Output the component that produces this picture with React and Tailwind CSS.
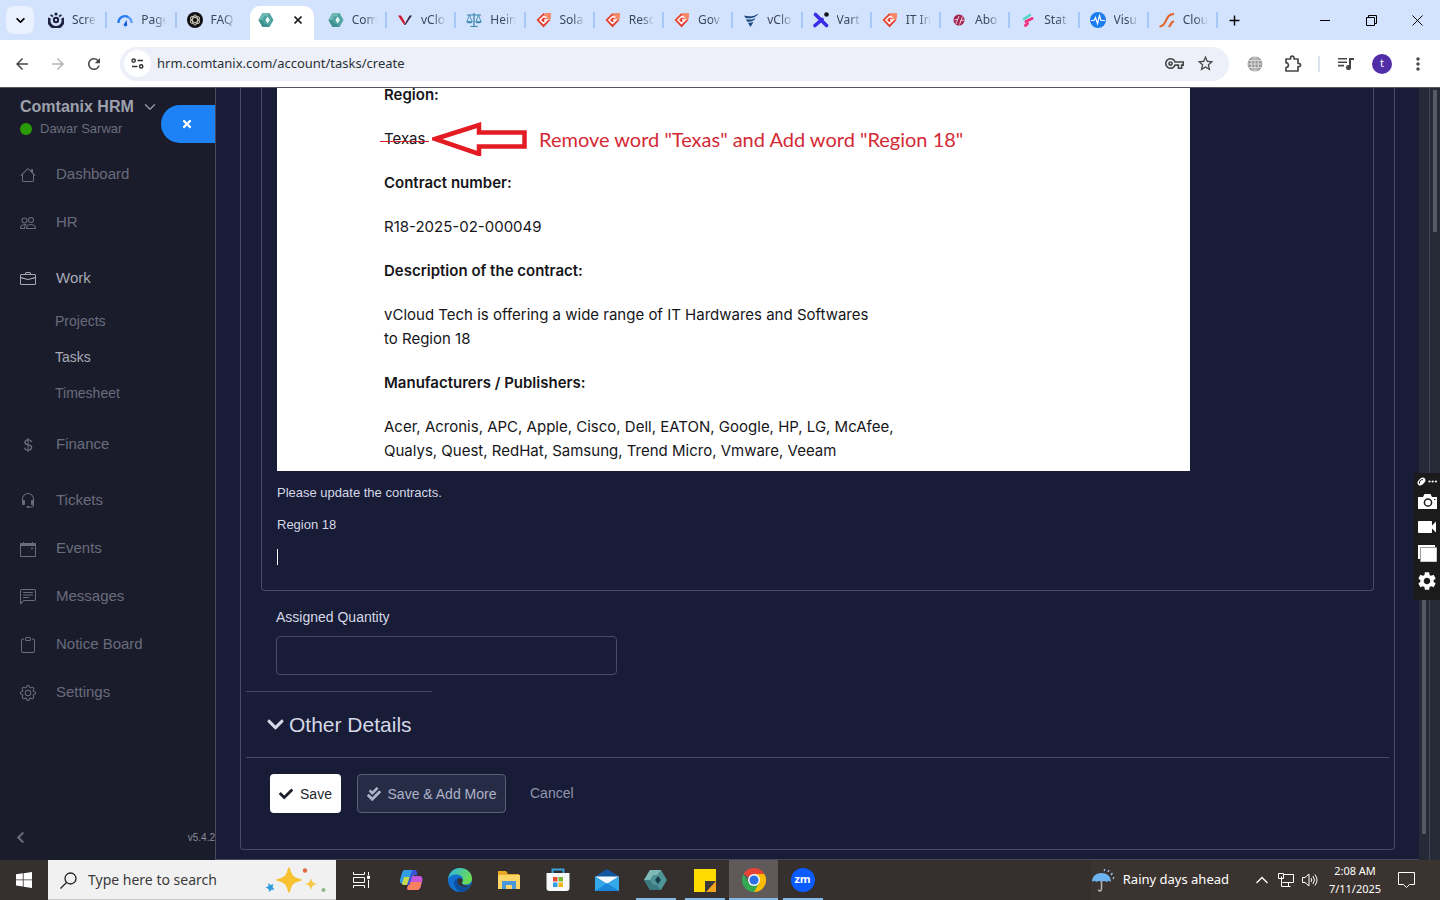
import { useState } from "react";
import {
  BsHouse,
  BsPeople,
  BsBriefcase,
  BsCurrencyDollar,
  BsHeadset,
  BsChatLeftText,
  BsClipboard,
  BsGear,
  BsChevronDown,
} from "react-icons/bs";
import { FaCheck, FaCheckDouble, FaChevronDown, FaChevronLeft, FaTimes } from "react-icons/fa";
import {
  MdArrowBack,
  MdArrowForward,
  MdRefresh,
  MdStarBorder,
  MdOutlineVpnKey,
  MdMoreVert,
  MdAdd,
  MdVideocam,
  MdSettings,
} from "react-icons/md";

// ─── Favicons ──────────────────────────────────────────────────────────────────
function HexLogo({ size = 16 }) {
  return (
    <svg width={size} height={size} viewBox="0 0 16 16">
      <path d="M4.500 1h7L15.500 8l-4 7h-7L.5 8z" fill="#4fa3a0" />
      <path d="M4.500 1h7L9 4H6.500L4 8 .5 8z" fill="#6fb8b4" />
      <path d="M.5 8H4l2.500 4H9l2.500 3h-7z" fill="#3f9090" />
      <path d="M9.500 4.500 12 8l-2.500 3.500L7.500 8z" fill="#e8f6f5" />
    </svg>
  );
}

// darker build of the mark used for the desktop app
function HexApp() {
  return (
    <svg width="23" height="22" viewBox="0 0 23 22">
      <path d="M6 1h11l6 10-6 10H6L0 11z" fill="#4f9497" />
      <path d="M6 1h11l-4 5H9l-3 5H0z" fill="#7fb9b8" />
      <path d="M0 11h6l3 5h4l4 5H6z" fill="#3a7a80" />
      <path d="M14 7l3 4-3 4-3-4z" fill="#173b4a" />
    </svg>
  );
}

function RedDiamond() {
  return (
    <svg width="16" height="16" viewBox="0 0 16 16">
      <path d="M7.500 1 14.500 8l-7 7.500L.5 8z" fill="#e5402f" />
      <path d="M9 1h6v5l-3 3-5-5z" fill="#f58a6c" />
      <path d="M10.500 5.500 7.500 4.500l-3.500 3.500 3.500 3.500 3.500-3.500H8" fill="none" stroke="#fff" strokeWidth="1.500" />
    </svg>
  );
}

function Screamer() {
  return (
    <svg width="16" height="16" viewBox="0 0 16 16">
      <path d="M1.500 6a7 7 0 1 0 13 0" fill="none" stroke="#1d2340" strokeWidth="3" />
      <circle cx="8" cy="8" r="3.200" fill="#1d2340" />
      <circle cx="8" cy="8" r="1.100" fill="#fff" />
      <circle cx="8" cy="2" r="1.600" fill="#1d2340" />
      <path d="m2.500 3 2.500 1.500M13.500 3 11 4.500" stroke="#1d2340" strokeWidth="1.800" />
    </svg>
  );
}

function Speed() {
  return (
    <svg width="16" height="16" viewBox="0 0 16 16">
      <path d="M1.500 11a6.500 6.500 0 0 1 10-5.800" fill="none" stroke="#2a7bf6" strokeWidth="2.400" />
      <path d="M11 5a6.500 6.500 0 0 1 3.500 6" fill="none" stroke="#5b9cf8" strokeWidth="2.400" />
      <path d="m6.500 13 3-5 .8 5a2 2 0 0 1-3.800 0z" fill="#1a5fe0" />
    </svg>
  );
}

function Gpt() {
  return (
    <svg width="16" height="16" viewBox="0 0 16 16">
      <circle cx="8" cy="8" r="8" fill="#111" />
      <g fill="none" stroke="#d8cfc0" strokeWidth=".9">
        <ellipse cx="8" cy="8" rx="2.500" ry="5" />
        <ellipse cx="8" cy="8" rx="2.500" ry="5" transform="rotate(60 8 8)" />
        <ellipse cx="8" cy="8" rx="2.500" ry="5" transform="rotate(120 8 8)" />
      </g>
    </svg>
  );
}

function RedV() {
  return (
    <svg width="16" height="16" viewBox="0 0 16 16">
      <path d="M1 3.500h3L8 10l-.8 3z" fill="#d0172c" />
      <path d="m7.200 13 5.300-9.500H15L8.500 13z" fill="#3a2340" />
    </svg>
  );
}

function Scales() {
  return (
    <svg width="16" height="16" viewBox="0 0 16 16" fill="none" stroke="#3583ae" strokeWidth="1.200">
      <path d="M8 1v13M4.500 14.500h7M1 3h14" />
      <path d="M3.500 3 1 9.500M3.500 3 6 9.500M12.500 3 10 9.500M12.500 3 15 9.500" strokeWidth=".8" />
      <path d="M.5 9.500h6c-.5 2-5.500 2-6 0zM9.500 9.500h6c-.5 2-5.500 2-6 0z" fill="#3583ae" strokeWidth=".5" />
    </svg>
  );
}

function NavyWing() {
  return (
    <svg width="16" height="16" viewBox="0 0 16 16" fill="#1f4a80">
      <path d="M1 3.500c5 1.500 10 1 14.500-2C13 6 7 7 2.500 6z" />
      <path d="M3 7.200c3.500.8 7 .3 9.500-1.200-1 3-5 4.300-8.300 3.700z" />
      <path d="M5 10.700c2 .4 3.800 0 5.300-1-.7 2.500-2.500 4.500-3 5.300z" />
    </svg>
  );
}

function Varta() {
  return (
    <svg width="16" height="16" viewBox="0 0 16 16">
      <path d="m2.500 2.500 11 11M2 13.500l7-6" stroke="#3a2ce8" strokeWidth="3.600" strokeLinecap="round" />
      <circle cx="13.500" cy="2.500" r="2.300" fill="#111" />
    </svg>
  );
}

function Crimson() {
  return (
    <svg width="16" height="16" viewBox="0 0 16 16">
      <circle cx="8" cy="8" r="5.500" fill="#a3234f" />
      <path d="m5 12 3-8M8.500 12.500l3-8M3.500 8l3-1M9 9l4-1" stroke="#f2c9d8" strokeWidth="1" />
    </svg>
  );
}

function Statly() {
  return (
    <svg width="16" height="16" viewBox="0 0 16 16" strokeLinecap="round" fill="none">
      <path d="m4 7 6-4" stroke="#53d6c4" strokeWidth="2.600" />
      <path d="m6 9.500 6-3" stroke="#f2347f" strokeWidth="3" />
      <path d="m5.500 13.500 2-2" stroke="#f2347f" strokeWidth="3" />
    </svg>
  );
}

function Pulse() {
  return (
    <svg width="16" height="16" viewBox="0 0 16 16">
      <circle cx="8" cy="8" r="8" fill="#1c7cf2" />
      <path d="M1 8.500h3l1.500-3 2 6 2-8 1.500 5H15" fill="none" stroke="#fff" strokeWidth="1.200" />
    </svg>
  );
}

function OrangeS() {
  return (
    <svg width="16" height="16" viewBox="0 0 16 16" fill="none" stroke="#e2622b">
      <path d="M.5 14.500c8 0 5-12.500 14.500-12.500" strokeWidth="2.200" />
      <path d="M9.500 14.500c3 0 1.500-5 5.500-5" strokeWidth="2.200" />
    </svg>
  );
}

const TABS = [
  { title: "Scre", icon: <Screamer /> },
  { title: "Page", icon: <Speed /> },
  { title: "FAQ", icon: <Gpt /> },
  { title: "", icon: <HexLogo />, active: true },
  { title: "Com", icon: <HexLogo /> },
  { title: "vClo", icon: <RedV /> },
  { title: "Hein", icon: <Scales /> },
  { title: "Sola", icon: <RedDiamond /> },
  { title: "Resc", icon: <RedDiamond /> },
  { title: "Gov", icon: <RedDiamond /> },
  { title: "vClo", icon: <NavyWing /> },
  { title: "Vart", icon: <Varta /> },
  { title: "IT In", icon: <RedDiamond /> },
  { title: "Abo", icon: <Crimson /> },
  { title: "Stat", icon: <Statly /> },
  { title: "Visu", icon: <Pulse /> },
  { title: "Clou", icon: <OrangeS /> },
];

// ─── Browser ───────────────────────────────────────────────────────────────────
function TabStrip() {
  return (
    <div className="flex h-10 shrink-0 bg-[#d3e3fd]">
      <div className="w-[38px] shrink-0 pl-1.5 pt-1.5">
        <button aria-label="Search tabs" className="flex size-7 items-center justify-center rounded-lg bg-[#e9f1fe]">
          <BsChevronDown size={9} strokeWidth={2} />
        </button>
      </div>
      <div className="flex min-w-0 flex-1">
        {TABS.map((t, i) =>
          t.active ? (
            <div key={i} className="flex w-[72px] shrink-0 items-end px-1">
              <div className="flex h-[34px] flex-1 items-center justify-between rounded-t-[10px] bg-white pr-3 pb-1.5 pl-2">
                {t.icon}
                <button aria-label="Close tab">
                  <svg width="8" height="8" viewBox="0 0 8 8"><path d="m.5.5 7 7M7.500.5l-7 7" stroke="#1f1f1f" strokeWidth="1.600" /></svg>
                </button>
              </div>
            </div>
          ) : (
            <div key={i} className="flex min-w-0 flex-1 items-center gap-2 pl-2.5">
              <span className="shrink-0">{t.icon}</span>
              <span className="min-w-0 flex-1 whitespace-nowrap text-xs text-[#3c4758] [mask-image:linear-gradient(to_right,black_50%,transparent)]">
                {t.title}
              </span>
              <span className={i === 2 ? "w-0.5" : "h-4 w-0.5 shrink-0 bg-[#a9c7f5]"} />
            </div>
          )
        )}
      </div>
      <div className="flex w-[222px] shrink-0 items-center pl-2">
        <button aria-label="New tab" className="mr-auto"><MdAdd size={17} /></button>
        <button aria-label="Minimize" className="flex w-[46px] justify-center">
          <svg width="10" height="10" viewBox="0 0 10 10"><path d="M0 5.500h10" stroke="#000" /></svg>
        </button>
        <button aria-label="Restore" className="flex w-[46px] justify-center">
          <svg width="11" height="11" viewBox="0 0 11 11" fill="none" stroke="#000"><path d="M.5 2.500h8v8h-8zM2.500 2.500v-2h8v8h-2" /></svg>
        </button>
        <button aria-label="Close" className="flex w-[46px] justify-center">
          <svg width="11" height="11" viewBox="0 0 11 11"><path d="m.5.5 10 10M10.500.5l-10 10" stroke="#000" /></svg>
        </button>
      </div>
    </div>
  );
}

function Toolbar() {
  return (
    <div className="flex h-12 shrink-0 items-center border-b border-[#55575f] bg-white text-[#474747]">
      <div className="flex w-[120px] shrink-0 justify-between pl-[13px] pr-[17px]">
        <button aria-label="Back"><MdArrowBack size={18} /></button>
        <button aria-label="Forward" className="text-[#b4b4b4]"><MdArrowForward size={18} /></button>
        <button aria-label="Reload"><MdRefresh size={18} /></button>
      </div>
      <div className="flex h-[34px] min-w-0 flex-1 items-center rounded-full bg-[#edf0f9] pl-1 pr-3.5">
        <button aria-label="Site information" className="mr-1.5 flex size-[27px] shrink-0 items-center justify-center rounded-full bg-white">
          <svg width="13" height="11" viewBox="0 0 14 12" fill="none" stroke="#333" strokeWidth="1.600">
            <circle cx="2.800" cy="2.800" r="1.800" /><path d="M7 2.800h6M1 9.200h6" /><circle cx="11" cy="9.200" r="1.800" />
          </svg>
        </button>
        <input
          aria-label="Address"
          defaultValue="hrm.comtanix.com/account/tasks/create"
          className="min-w-0 flex-1 bg-transparent text-[13px] text-[#2b3036] outline-none"
        />
        <MdOutlineVpnKey size={19} />
        <MdStarBorder size={19} className="ml-3" />
      </div>
      <div className="flex w-[211px] shrink-0 items-center pl-[18px] pr-3">
        <svg width="16" height="16" viewBox="0 0 16 16">
          <circle cx="8" cy="8" r="7.500" fill="#9b9b9b" />
          <path d="M8 0v16M.5 8h15M1.500 4.500h13M1.500 11.500h13M8 .5c-5 4-5 11 0 15M8 .5c5 4 5 11 0 15" fill="none" stroke="#e6e6e6" strokeWidth=".8" />
        </svg>
        <svg className="ml-[21px]" width="18" height="18" viewBox="0 0 18 18">
          <path d="M2 4h4.500V3a1.800 1.800 0 0 1 3.600 0v1H14v4.500h1a1.600 1.600 0 0 1 0 3.200h-1V16H2v-3.500c3.200 0 3.200-4.800 0-4.800z" fill="none" stroke="#474747" strokeWidth="1.700" strokeLinejoin="round" />
        </svg>
        <span className="ml-4 h-4 w-0.5 bg-[#dde3ee]" />
        <svg className="ml-[18px]" width="16" height="14" viewBox="0 0 16 14" fill="#474747">
          <path d="M0 1h9v1.600H0zM0 4.400h9V6H0zM0 7.800h6v1.600H0zM11 1h5v2h-3v7.500a2.500 2.500 0 1 1-2-2.400z" />
        </svg>
        <span className="ml-auto flex size-5 items-center justify-center rounded-full bg-[#512da8] text-[11px] text-white">t</span>
        <MdMoreVert size={20} className="ml-4" />
      </div>
    </div>
  );
}

// ─── Sidebar ───────────────────────────────────────────────────────────────────
function CalendarIcon() {
  return (
    <svg width="16" height="16" viewBox="0 0 16 16" fill="none" stroke="currentColor">
      <path d="M.5 2.500h15v13H.5z" />
      <path d="M0 3.500h16" strokeWidth="3" />
      <path d="M3.500 1v2M12.500 1v2" />
      <path d="M11.500 7h1v1h-1z" fill="currentColor" />
    </svg>
  );
}

const MENU = [
  { label: "Dashboard", icon: <BsHouse size={16} /> },
  { label: "HR", icon: <BsPeople size={16} />, group: true },
  { label: "Work", icon: <BsBriefcase size={16} />, active: true, children: ["Projects", "Tasks", "Timesheet"] },
  { label: "Finance", icon: <BsCurrencyDollar size={16} />, group: true },
  { label: "Tickets", icon: <BsHeadset size={16} /> },
  { label: "Events", icon: <CalendarIcon /> },
  { label: "Messages", icon: <BsChatLeftText size={16} /> },
  { label: "Notice Board", icon: <BsClipboard size={16} /> },
  { label: "Settings", icon: <BsGear size={16} /> },
];

function Sidebar() {
  return (
    <aside className="flex w-[216px] shrink-0 flex-col border-r border-[#474a5d] bg-[#1a1c2c] font-['Liberation_Sans',sans-serif] text-[#696c7b]">
      <div className="flex h-[62px] items-start justify-between">
        <div className="pl-5 pt-2">
          <button className="flex items-center gap-2.5 text-base leading-[22px] font-bold text-[#9fa1ad]">
            Comtanix HRM <BsChevronDown size={12} strokeWidth={1} />
          </button>
          <p className="flex items-center gap-2 text-[13px] leading-[22px]">
            <span className="size-3 rounded-full bg-[#2a9a06]" />
            Dawar Sarwar
          </p>
        </div>
        <button aria-label="Close panel" className="mt-[17px] flex h-[38px] w-[54px] shrink-0 items-center justify-center rounded-l-full bg-[#1d82f5] pr-0.5 text-white">
          <FaTimes size={12} />
        </button>
      </div>
      <nav>
        {MENU.map((m) => (
          <div key={m.label} className={m.group ? "mb-2" : m.children ? "mb-2.5" : ""}>
            <a href="#" className={`flex h-12 items-center gap-5 pl-5 text-[15px] ${m.active ? "text-[#a9abb6]" : ""}`}>
              <span className="pt-0.5">{m.icon}</span>
              {m.label}
            </a>
            {m.children && m.children.map((c) => (
              <a key={c} href="#" className={`flex h-9 items-center pt-px pl-[55px] text-sm ${c === "Tasks" ? "text-[#a9abb6]" : ""}`}>
                {c}
              </a>
            ))}
          </div>
        ))}
      </nav>
      <div className="mt-auto flex h-[46px] items-center justify-between pl-3.5 text-[10px]">
        <button aria-label="Collapse menu"><FaChevronLeft size={13} /></button>
        <span className="text-[#8a8c99]">v5.4.2</span>
      </div>
    </aside>
  );
}

// ─── Contract snippet with the markup over it ──────────────────────────────────
function ContractSnippet() {
  return (
    <div className="w-[913px] max-w-full bg-white pb-2 pl-[107px] font-['Inter',sans-serif] text-[15px] leading-6 text-[#16161a]">
      <p className="mb-[25px] leading-[14px] font-semibold">Region:</p>
      <div className="flex flex-col gap-5">
        <div className="flex h-6 items-center whitespace-nowrap">
          <span className="relative w-[41px]">
            Texas
            <span className="absolute -right-1 -left-1 top-3.5 h-px bg-[#d8202c]" />
          </span>
          <svg className="ml-[7px] shrink-0" width="95" height="34" viewBox="0 0 95 34">
            <path d="M3 17 47 3v7.500h45.500v14H47V32z" fill="#fff" stroke="#e31b23" strokeWidth="4.500" />
          </svg>
          <span className="ml-3 font-['Lato',sans-serif] text-[20px] text-[#d42a36]">
            Remove word "Texas" and Add word "Region 18"
          </span>
        </div>
        <p className="font-semibold">Contract number:</p>
        <p>R18-2025-02-000049</p>
        <p className="font-semibold">Description of the contract:</p>
        <p>
          vCloud Tech is offering a wide range of IT Hardwares and Softwares
          <br />
          to Region 18
        </p>
        <p className="font-semibold">Manufacturers / Publishers:</p>
        <p>
          Acer, Acronis, APC, Apple, Cisco, Dell, EATON, Google, HP, LG, McAfee,
          <br />
          Qualys, Quest, RedHat, Samsung, Trend Micro, Vmware, Veeam
        </p>
      </div>
    </div>
  );
}

// ─── Task form ─────────────────────────────────────────────────────────────────
function TaskForm() {
  const [qty, setQty] = useState("");

  return (
    <main className="min-w-0 flex-1 overflow-hidden border-b border-[#474a5d] bg-[#181c36] px-6 font-['Liberation_Sans',sans-serif] text-[#d5d8e6]">
      <form className="rounded-b border-x border-b border-[#474a62] px-[5px] pb-9" onSubmit={(e) => e.preventDefault()}>
        <div className="mx-[15px] rounded-b border-x border-b border-[#474a62] px-[15px] pb-6">
          <ContractSnippet />
          <div className="flex flex-col gap-3 pt-3 text-[13px] leading-5">
            <p>Please update the contracts.</p>
            <p>Region 18</p>
            <p className="flex h-[19px] items-center"><span className="h-4 w-px bg-white" /></p>
          </div>
        </div>

        <div className="px-[30px] pt-4">
          <label htmlFor="qty" className="block text-sm leading-5">Assigned Quantity</label>
          <input
            id="qty"
            value={qty}
            onChange={(e) => setQty(e.target.value)}
            className="mt-[9px] block h-[39px] w-[341px] rounded border border-[#474a62] bg-transparent px-3 text-sm outline-none"
          />
        </div>

        <hr className="mt-4 w-[186px] border-[#474a62]" />
        <h4 className="flex h-[65px] items-center gap-1 pl-5 text-[21px]">
          <FaChevronDown size={19} /> Other Details
        </h4>
        <hr className="border-[#474a62]" />

        <div className="mt-4 flex items-center pl-6 text-sm">
          <button className="flex h-[39px] w-[71px] items-center justify-center gap-[7px] rounded-sm bg-white text-[#1d1f2b]">
            <FaCheck size={14} /> Save
          </button>
          <button className="ml-4 flex h-[39px] w-[149px] items-center justify-center gap-[7px] rounded-sm border border-[#5b5f75] bg-[#272c46] text-[#aeb3c9]">
            <FaCheckDouble size={14} /> Save &amp; Add More
          </button>
          <a href="#" className="ml-6 pb-0.5 text-[#9195ab]">Cancel</a>
        </div>
      </form>
    </main>
  );
}

function ScrollRails() {
  return (
    <div className="flex w-[21px] shrink-0">
      <div className="flex w-[11px] flex-col justify-end border-r border-[#41464f] bg-[#252a38] pb-[26px] pl-[3px]">
        <div className="h-[236px] w-1 bg-[#555a63]" />
      </div>
      <div className="flex-1 bg-[#252c38] pl-[3px] pt-0.5">
        <div className="h-[142px] w-1 bg-[#555a63]" />
      </div>
    </div>
  );
}

function RecorderDock() {
  return (
    <div className="absolute right-0 top-[385px] flex h-[127px] w-[26px] flex-col items-center gap-2 bg-[#1b1b1b] pt-1 text-white">
      <svg width="20" height="9" viewBox="0 0 20 9" fill="#fff">
        <ellipse cx="4.500" cy="4.500" rx="4.500" ry="3" transform="rotate(-45 4.500 4.500)" />
        <path d="M2.500 6.500c-.5-2 1-4 3.500-4" fill="none" stroke="#1b1b1b" />
        <circle cx="12.500" cy="4.500" r="1.100" /><circle cx="15.700" cy="4.500" r="1.100" /><circle cx="18.900" cy="4.500" r="1.100" />
      </svg>
      <svg className="shrink-0" width="19" height="15" viewBox="0 0 19 15">
        <path d="M0 3h5l1.500-3h6L14 3h5v12H0z" fill="#fff" />
        <circle cx="10" cy="8.500" r="3.600" fill="#fff" stroke="#1b1b1b" strokeWidth="1.500" />
        <path d="M16 5h1.500v1H16z" fill="#1b1b1b" />
      </svg>
      <MdVideocam size={24} className="-my-0.5 shrink-0" />
      <svg className="shrink-0" width="19" height="17" viewBox="0 0 19 17">
        <path d="M0 0h17v14H0z" fill="#fff" />
        <path d="M2.500 2.500H19V17H2.500z" fill="#fff" stroke="#999" />
      </svg>
      <MdSettings size={22} className="shrink-0" />
    </div>
  );
}

// ─── Taskbar ───────────────────────────────────────────────────────────────────
const APPS = [
  {
    name: "Task View",
    icon: (
      <svg width="18" height="16" viewBox="0 0 18 16" fill="none" stroke="#fff">
        <path d="M.5 0v2.500h11V0M.5 5.500h11v5H.5zM.5 16v-2.500h11V16M15.500 0v3M15.500 8v8" />
        <path d="M14.500 4h2v2.500h-2z" fill="#fff" />
      </svg>
    ),
  },
  {
    name: "Copilot",
    icon: (
      <svg width="24" height="22" viewBox="0 0 24 22">
        <path d="M6 1h8c1.500 0 2 1 1.500 2.500L12 15H4c-3 0-3.500-3-2.500-6L3 4c.6-2 1.500-3 3-3z" fill="#2f9fe8" />
        <path d="M5 8 3 15c.5 1 1.500 1 2.500 1h5l2-8z" fill="#c5d94a" />
        <path d="M10 21h8c2 0 3-1.500 3.500-3l1.500-5c1-3 .5-6-2.500-6h-8.500L8.500 18.500C8 20 8.500 21 10 21z" fill="#c557dc" />
        <path d="M10 21c-2 0-2-1.500-1.500-3L10 13h12.500l-1 5c-.6 2-1.600 3-3.600 3z" fill="#f7805f" />
        <path d="M13 1h3c1.500 0 2 2 2.500 5H15c-1 0-1.500.5-1.800 1.500L10.500 16H8z" fill="#3b55d8" />
      </svg>
    ),
  },
  {
    name: "Edge",
    icon: (
      <svg width="24" height="24" viewBox="0 0 24 24">
        <defs>
          <linearGradient id="edgeTop" x1="0" y1="0" x2="1" y2=".5">
            <stop offset="0" stopColor="#29b6e8" />
            <stop offset="1" stopColor="#6ddc50" />
          </linearGradient>
        </defs>
        <circle cx="12" cy="12" r="12" fill="#1271cf" />
        <path d="M0 11C1 4.500 6 0 12 0c7 0 12 5 12 10.500 0 4-3 6-6.500 6-2.500 0-3.500-1-3.500-2 0-.8 1-1.200 1-3C15 9 12.500 6.500 8.500 6.500 4.500 6.500 1 8.500 0 11z" fill="url(#edgeTop)" />
        <path d="M9 13c0-1 .5-2 1.500-2.700C8 10 5 13 6.500 17.500 8 22 12 24 14 23.800c4-.5 7-3 8.500-6.300-5 3-13.500 1.500-13.500-4.500z" fill="#0d4f9e" />
        <path d="M10.500 10.300c-2 2-1.500 5 .5 6.700 3 2.500 8 2.500 12 .3l-3 .2c-5 .5-6.500-1.500-6-3 .8-1.300 1-2.500-.2-3.500-1-.9-2-1.200-3.300-.7z" fill="#352f2e" />
      </svg>
    ),
  },
  {
    name: "File Explorer",
    icon: (
      <svg width="22" height="20" viewBox="0 0 22 20">
        <path d="M0 1h8l2 3h11v14H0z" fill="#e9a825" />
        <path d="M0 5h22v14H0z" fill="#fcd566" />
        <path d="M4 11h14v8h-4v-4H8v4H4z" fill="#4a97dc" />
      </svg>
    ),
  },
  {
    name: "Store",
    icon: (
      <svg width="24" height="24" viewBox="0 0 24 24">
        <path d="M6.500 6V1.500h11V6" fill="none" stroke="#3aa3dd" strokeWidth="2" />
        <path d="M.5 5h23v15a3 3 0 0 1-3 3h-17a3 3 0 0 1-3-3z" fill="#f6f8fa" />
        <path d="M7 9h4.500v4.500H7z" fill="#e8502e" /><path d="M12.500 9H17v4.500h-4.500z" fill="#7cb82f" />
        <path d="M7 14.500h4.500V19H7z" fill="#2f9fe0" /><path d="M12.500 14.500H17V19h-4.500z" fill="#f4b41a" />
      </svg>
    ),
  },
  {
    name: "Mail",
    icon: (
      <svg width="24" height="24" viewBox="0 0 24 24">
        <path d="M0 8.500 12 1l12 7.500V16H0z" fill="#1256a0" />
        <path d="M0 8.500h24L12 16z" fill="#f3f8fc" />
        <path d="M0 8.500 12 16l12-7.500V23H0z" fill="#33a9ea" />
        <path d="M0 23 12 15l12 8z" fill="#1b86d8" />
      </svg>
    ),
  },
  { name: "Comtanix", icon: <HexApp />, open: true },
  {
    name: "Sticky Notes",
    icon: (
      <svg width="22" height="23" viewBox="0 0 22 23">
        <path d="M0 0h22v12L11 23H0z" fill="#fddb00" />
        <path d="M11 12h11v11H11z" fill="#3a3a3a" /><path d="M22 12v11H12z" fill="#f2a420" />
      </svg>
    ),
    open: true,
  },
  {
    name: "Chrome",
    icon: (
      <svg width="24" height="24" viewBox="0 0 24 24">
        <path d="M12 12 1.600 6A12 12 0 0 1 22.400 6z" fill="#ea4335" />
        <path d="M12 12V6h10.400A12 12 0 0 1 12 24z" fill="#fbbc05" />
        <path d="M1.600 6A12 12 0 0 0 12 24l5.200-9-5.200-3-5.200 3z" fill="#34a853" />
        <circle cx="12" cy="12" r="6" fill="#fff" /><circle cx="12" cy="12" r="4.600" fill="#2f6fe4" />
      </svg>
    ),
    open: true,
    active: true,
  },
  {
    name: "Zoom",
    icon: <span className="flex size-6 items-center justify-center rounded-full bg-[#0b5cff] pb-0.5 font-['Open_Sans',sans-serif] text-[11px] font-bold text-white">zm</span>,
    open: true,
  },
];

function Taskbar() {
  return (
    <footer className="flex h-10 shrink-0 items-stretch bg-[#352f2e] text-white">
      <button aria-label="Start" className="flex w-12 items-center justify-center">
        <svg width="16" height="16" viewBox="0 0 16 16" fill="#fff">
          <path d="M0 2.300 6.800 1.300v6.200H0zM7.600 1.200 16 0v7.500H7.600zM0 8.300h6.800v6.300L0 13.600zM7.600 8.300H16V16l-8.400-1.200z" />
        </svg>
      </button>
      <label className="flex w-72 items-center border-b border-[#c8c8c8] bg-[#f1f1f1] pt-px pl-3 pr-[9px]">
        <svg width="17" height="17" viewBox="0 0 17 17" fill="none" stroke="#222" strokeWidth="1.300">
          <circle cx="10.500" cy="6.500" r="5.500" /><path d="M6.500 10.500.5 16.500" />
        </svg>
        <input
          aria-label="Search"
          placeholder="Type here to search"
          className="ml-[11px] min-w-0 flex-1 bg-transparent text-sm text-[#333] outline-none placeholder:text-[#3a3a3a]"
        />
        <svg width="62" height="26" viewBox="0 0 62 26">
          <path d="M24 1c2 8 4 10 12 12-8 2-10 4-12 12-2-8-4-10-12-12 8-2 10-4 12-12z" fill="#f7c331" stroke="#f7c331" strokeWidth="1.500" strokeLinejoin="round" />
          <path d="M46 11c1 4 2 5 6 6-4 1-5 2-6 6-1-4-2-5-6-6 4-1 5-2 6-6z" fill="#f5c84a" />
          <path d="m3 16 2.500 2 3-1-1 3 2 2.500-3 .3L4.500 25l-1-3-3-1.500 3-1.300z" fill="#2e9bdc" />
          <circle cx="40" cy="3.500" r="2.200" fill="#dd6a41" /><circle cx="58.500" cy="23" r="2" fill="#8fb58a" />
        </svg>
      </label>
      <div className="flex pl-px">
        {APPS.map((a) => (
          <button key={a.name} aria-label={a.name} className={`flex w-[49px] flex-col items-center ${a.active ? "bg-[#5f5a59]" : ""}`}>
            <span className="flex flex-1 items-center pt-0.5">{a.icon}</span>
            <span className={a.active ? "h-0.5 w-full bg-[#84b9e6]" : a.open ? "h-0.5 w-10 bg-[#84b9e6]" : "h-0.5"} />
          </button>
        ))}
      </div>
      <div className="ml-auto flex items-center bg-[#3b332f] pr-[5px]">
        <svg width="24" height="24" viewBox="0 0 24 24">
          <path d="M1 14C1 8 5.500 5 10.500 5S20 8 20 14c-1.500-1.500-3-1.500-4.500 0-1.500-1.500-3.500-1.500-5 0-1.500-1.500-3.500-1.500-5 0-1.500-1.500-3-1.500-4.500 0z" fill="#6db3ee" />
          <path d="M10.500 13v8c0 2.500-3 2.500-3 .5" fill="none" stroke="#b5b5b5" strokeWidth="1.500" />
          <path d="m13 3 1-2M17 4l1-2M20 7l1.500-2M22 11l1-2" stroke="#9cc8ee" strokeWidth="1.300" />
        </svg>
        <span className="ml-2 text-[13px]">Rainy days ahead</span>
        <svg className="ml-[27px]" width="12" height="8" viewBox="0 0 12 8" fill="none" stroke="#fff" strokeWidth="1.300"><path d="m.5 7 5.500-5.500L11.500 7" /></svg>
        <svg className="ml-2.5" width="17" height="14" viewBox="0 0 17 14" fill="none" stroke="#fff">
          <path d="M5.500 1.500h10v8h-11M3.500 5.500v8h9M10.500 9.500v4M.5.500h5v5h-5zM3.500 3.500v3" />
        </svg>
        <svg className="ml-[7px]" width="16" height="14" viewBox="0 0 16 14" fill="none" stroke="#fff">
          <path d="M.5 4.500h2.500l4-3.500v12L3 9.500H.5zM9 5q1.500 2 0 4M11 3q3 4 0 8M13 1.500q4 5.500 0 11" />
        </svg>
        <div className="ml-2.5 w-[54px] text-center text-[11px] leading-[18px] whitespace-nowrap">
          <p>2:08 AM</p>
          <p>7/11/2025</p>
        </div>
        <svg className="ml-4 mr-5" width="17" height="16" viewBox="0 0 17 16" fill="none" stroke="#fff">
          <path d="M.5.500h16v12h-5l-3 3-3-3h-5z" />
        </svg>
      </div>
    </footer>
  );
}

// ─── Main ──────────────────────────────────────────────────────────────────────
export default function App() {
  return (
    <div className="flex h-screen flex-col overflow-hidden font-['Noto_Sans',sans-serif]">
      <TabStrip />
      <Toolbar />
      <div className="relative flex min-h-0 flex-1">
        <Sidebar />
        <TaskForm />
        <ScrollRails />
        <RecorderDock />
      </div>
      <Taskbar />
    </div>
  );
}
